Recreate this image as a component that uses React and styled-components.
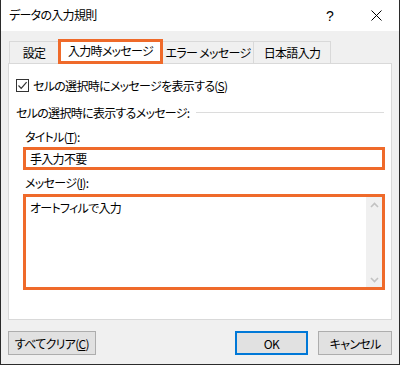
import React from 'react';
import styled, { createGlobalStyle } from 'styled-components';

const ORANGE = '#ef6a2a';

const Global = createGlobalStyle`
  html, body {
    margin: 0;
    padding: 0;
    background: #f0f0f0;
  }
  body {
    font-family: "Noto Sans CJK JP", "Noto Sans", sans-serif;
    font-size: 12px;
    letter-spacing: -0.7px;
    color: #000;
    font-feature-settings: "palt";
  }
`;

const Window = styled.div`
  width: 400px;
  height: 365px;
  box-sizing: border-box;
  border: 1px solid #2b2b2b;
  border-top: none;
  display: flex;
  flex-direction: column;
  background: #f0f0f0;
`;

const TitleBar = styled.div`
  height: 31px;
  flex: none;
  background: #fff;
  display: flex;
  align-items: center;
  padding-left: 8px;
`;

const TitleText = styled.span`
  flex: 1;
  line-height: 16px;
  padding-bottom: 1px;
`;

const TitleButton = styled.div`
  width: 46px;
  height: 31px;
  display: flex;
  align-items: center;
  justify-content: center;
  font-family: "Liberation Sans", sans-serif;
  font-size: 14px;
  letter-spacing: 0;
`;

const Body = styled.div`
  flex: 1;
  display: flex;
  flex-direction: column;
  padding: 8px 7px 9px 7px;
`;

const TabRow = styled.div`
  height: 24px;
  display: flex;
  align-items: flex-end;
  padding-left: 1px;
`;

const Tab = styled.div`
  position: relative;
  box-sizing: border-box;
  width: ${p => p.$w}px;
  height: ${p => (p.$active ? 25 : 22)}px;
  margin-bottom: ${p => (p.$active ? -1 : 0)}px;
  margin-left: ${p => (p.$first ? 0 : -1)}px;
  z-index: ${p => (p.$active ? 2 : 1)};
  background: ${p => (p.$active ? '#fff' : '#f0f0f0')};
  border: ${p => (p.$active ? `3px solid ${ORANGE}` : '1px solid #d9d9d9')};
  border-bottom: ${p => (p.$active ? `3px solid ${ORANGE}` : 'none')};
  display: flex;
  align-items: center;
  justify-content: center;
  padding-bottom: ${p => (p.$active ? 2 : 0)}px;
  white-space: nowrap;
`;

const Panel = styled.div`
  height: 257px;
  box-sizing: border-box;
  background: #fff;
  border: 1px solid #d9d9d9;
  padding: 12px 7px 0 7px;
  display: flex;
  flex-direction: column;
`;

const CheckRow = styled.label`
  height: 18px;
  display: flex;
  align-items: center;
  gap: 4px;
`;

const Box = styled.span`
  width: 13px;
  height: 13px;
  box-sizing: border-box;
  border: 1px solid #333;
  background: #fff;
  display: flex;
  align-items: center;
  justify-content: center;
`;

const GroupRow = styled.div`
  margin-top: 10px;
  height: 17px;
  display: flex;
  align-items: center;
  gap: 6px;
`;

const GroupLine = styled.div`
  flex: 1;
  height: 1px;
  background: #dcdcdc;
`;

const Fields = styled.div`
  margin-left: 7px;
  margin-right: -1px;
  display: flex;
  flex-direction: column;
`;

const FieldLabel = styled.div`
  margin-top: ${p => p.$top}px;
  height: 16px;
  line-height: 16px;
  padding-left: 2px;
`;

const U = styled.span`
  text-decoration: underline;
  text-underline-offset: 1px;
`;

const TextInput = styled.div`
  margin-top: 2px;
  height: 23px;
  box-sizing: border-box;
  border: 3px solid ${ORANGE};
  background: #fff;
  padding-left: 4px;
  display: flex;
  align-items: center;
`;

const TextArea = styled.div`
  margin-top: 3px;
  height: 96px;
  box-sizing: border-box;
  border: 3px solid ${ORANGE};
  background: #fff;
  display: flex;
`;

const AreaText = styled.div`
  flex: 1;
  padding: 3px 4px;
  line-height: 16px;
`;

const ScrollBar = styled.div`
  width: 16px;
  background: #f0f0f0;
  display: flex;
  flex-direction: column;
  justify-content: space-between;
  align-items: center;
  padding: 5px 0 4px;
`;

const ButtonRow = styled.div`
  margin-top: 11px;
  height: 24px;
  display: flex;
  align-items: stretch;
`;

const Button = styled.div`
  box-sizing: border-box;
  width: ${p => p.$w}px;
  margin-left: ${p => p.$ml || 0}px;
  background: #e1e1e1;
  border: ${p => (p.$primary ? '2px solid #0078d7' : '1px solid #adadad')};
  display: flex;
  align-items: center;
  justify-content: center;
`;

const Chevron = ({ up }) => (
  <svg width="9" height="6" viewBox="0 0 9 6">
    <path
      d={up ? 'M1 5 L4.5 1.5 L8 5' : 'M1 1 L4.5 4.5 L8 1'}
      fill="none"
      stroke="#c2c2c2"
      strokeWidth="1.6"
    />
  </svg>
);

export default function App() {
  return (
    <>
      <Global />
      <Window>
        <TitleBar>
          <TitleText>データの入力規則</TitleText>
          <TitleButton>?</TitleButton>
          <TitleButton>
            <svg width="11" height="11" viewBox="0 0 11 11">
              <path d="M0.5 0.5 L10.5 10.5 M10.5 0.5 L0.5 10.5" stroke="#000" strokeWidth="1" />
            </svg>
          </TitleButton>
        </TitleBar>
        <Body>
          <TabRow>
            <Tab $w={50} $first>設定</Tab>
            <Tab $w={105} $active>入力時メッセージ</Tab>
            <Tab $w={92}>エラー メッセージ</Tab>
            <Tab $w={78}>日本語入力</Tab>
          </TabRow>
          <Panel>
            <CheckRow>
              <Box>
                <svg width="11" height="11" viewBox="0 0 11 11">
                  <path d="M1.5 5.5 L4.2 8.3 L9.6 2.2" fill="none" stroke="#333" strokeWidth="1.2" />
                </svg>
              </Box>
              <span>セルの選択時にメッセージを表示する(<U>S</U>)</span>
            </CheckRow>
            <GroupRow>
              <span>セルの選択時に表示するメッセージ:</span>
              <GroupLine />
            </GroupRow>
            <Fields>
              <FieldLabel $top={8}>タイトル(<U>T</U>):</FieldLabel>
              <TextInput>手入力不要</TextInput>
              <FieldLabel $top={5}>メッセージ(<U>I</U>):</FieldLabel>
              <TextArea>
                <AreaText>オートフィルで入力</AreaText>
                <ScrollBar>
                  <Chevron up />
                  <Chevron />
                </ScrollBar>
              </TextArea>
            </Fields>
          </Panel>
          <ButtonRow>
            <Button $w={88}>すべてクリア(<U>C</U>)</Button>
            <Button $w={74} $ml={139} $primary>OK</Button>
            <Button $w={74} $ml={10}>キャンセル</Button>
          </ButtonRow>
        </Body>
      </Window>
    </>
  );
}
